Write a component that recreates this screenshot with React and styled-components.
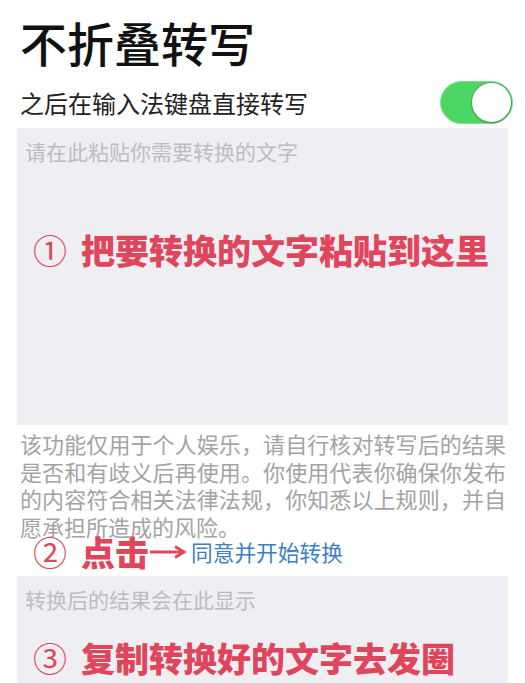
import React from "react";
import styled, { createGlobalStyle } from "styled-components";

const Global = createGlobalStyle`
  html, body { margin: 0; padding: 0; background: #fff; }
  body { font-family: "Noto Sans CJK SC", "Noto Sans", sans-serif; }
`;

const Page = styled.div`
  width: 525px;
  height: 683px;
  overflow: hidden;
  display: flex;
  flex-direction: column;
  padding: 0 17px;
  box-sizing: border-box;
`;

const Title = styled.h1`
  margin: 17px 0 0 3px;
  font-size: 47px;
  line-height: 50px;
  font-weight: 500;
  color: #111;
`;

const ToggleRow = styled.div`
  display: flex;
  align-items: center;
  justify-content: space-between;
  height: 44px;
  margin-top: 14px;
  margin-right: -5px;
`;

const Subtitle = styled.span`
  font-size: 24px;
  color: #222;
  margin-left: 3px;
  line-height: 1;
`;

const Switch = styled.div`
  width: 73px;
  height: 43px;
  border-radius: 22px;
  background: #4cd664;
  border: 1px solid #7fe08f;
  position: relative;
  box-sizing: border-box;
`;

const Knob = styled.div`
  position: absolute;
  right: 1px;
  top: 1px;
  width: 39px;
  height: 39px;
  border-radius: 50%;
  background: #fff;
  box-shadow: 0 0 0 1px rgba(60, 110, 70, 0.35), 0 1px 3px rgba(0, 0, 0, 0.2);
`;

const Box = styled.div`
  background: #efeef3;
  width: 491px;
  height: ${(p) => p.$h}px;
  margin-top: ${(p) => p.$mt}px;
  flex-shrink: 0;
  padding: 10px 8px 0 8px;
  box-sizing: border-box;
  display: flex;
  flex-direction: column;
`;

const Placeholder = styled.div`
  font-size: 21px;
  line-height: 26px;
  color: #bcbcc1;
`;

const Step = styled.div`
  display: flex;
  align-items: center;
  margin-top: ${(p) => p.$mt}px;
  margin-left: ${(p) => p.$ml}px;
  color: #e0465b;
  height: 34px;
`;

const Circled = styled.span`
  font-size: 34px;
  font-weight: 400;
  line-height: 1;
  margin-right: 14px;
`;

const StepText = styled.span`
  font-size: 34px;
  font-weight: 900;
  line-height: 1;
`;

const Disclaimer = styled.p`
  margin: 5px 0 0 3px;
  width: 486px;
  font-size: 22px;
  line-height: 27.5px;
  color: #a3a3a3;
  text-align: justify;
`;

const LinkText = styled.span`
  font-size: 21.7px;
  color: #3a80c4;
  line-height: 1;
  margin-left: 5px;
`;

const ArrowSvg = styled.svg`
  flex-shrink: 0;
  margin-left: 1px;
`;

const Arrow = () => (
  <ArrowSvg width="36" height="16" viewBox="0 0 36 16">
    <line x1="0" y1="8" x2="32" y2="8" stroke="#e0465b" strokeWidth="3" />
    <path d="M25 2.5 L34 8 L25 13.5" fill="none" stroke="#e0465b" strokeWidth="3" />
  </ArrowSvg>
);

export default function App() {
  return (
    <>
      <Global />
      <Page>
        <Title>不折叠转写</Title>
        <ToggleRow>
          <Subtitle>之后在输入法键盘直接转写</Subtitle>
          <Switch>
            <Knob />
          </Switch>
        </ToggleRow>
        <Box $h={297} $mt={4}>
          <Placeholder>请在此粘贴你需要转换的文字</Placeholder>
          <Step $mt={69} $ml={8}>
            <Circled>①</Circled>
            <StepText>把要转换的文字粘贴到这里</StepText>
          </Step>
        </Box>
        <Disclaimer>
          该功能仅用于个人娱乐，请自行核对转写后的结果是否和有歧义后再使用。你使用代表你确保你发布的内容符合相关法律法规，你知悉以上规则，并自愿承担所造成的风险。
        </Disclaimer>
        <Step $mt={-5} $ml={16}>
          <Circled>②</Circled>
          <StepText>点击</StepText>
          <Arrow />
          <LinkText>同意并开始转换</LinkText>
        </Step>
        <Box $h={200} $mt={7}>
          <Placeholder>转换后的结果会在此显示</Placeholder>
          <Step $mt={29} $ml={8}>
            <Circled>③</Circled>
            <StepText>复制转换好的文字去发圈</StepText>
          </Step>
        </Box>
      </Page>
    </>
  );
}
